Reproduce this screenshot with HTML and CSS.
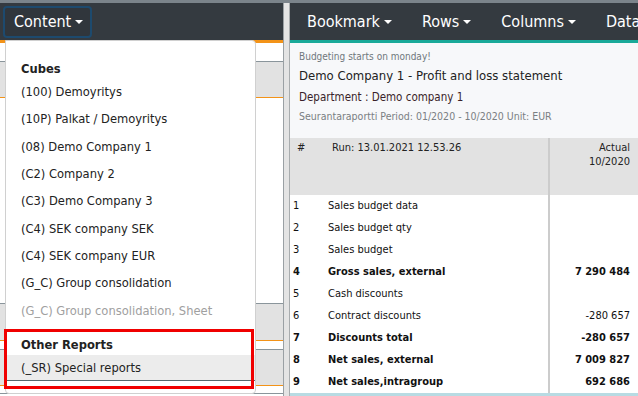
FILE: index.html
```html
<!DOCTYPE html>
<html>
<head>
<meta charset="utf-8">
<link rel="stylesheet" href="styles.css">
</head>
<body>
<div class="topstrip"></div>
<div class="main">
  <div class="leftpanel">
    <div class="navbar">
      <button class="navbtn focused">Content<span class="caret"></span></button>
    </div>
    <div class="orange-line"></div>
    <div class="lp-white h18"></div>
    <div class="lp-gray h36"></div>
    <div class="lp-white h205"></div>
    <div class="lp-gray h37"></div>
    <div class="lp-white h8"></div>
    <div class="lp-gray h36"></div>
    <div class="lp-white h7"></div>
    <div class="lp-line"></div>

    <div class="dropdown">
      <div class="dd-header">Cubes</div>
      <div class="dd-item">(100) Demoyritys</div>
      <div class="dd-item">(10P) Palkat / Demoyritys</div>
      <div class="dd-item">(08) Demo Company 1</div>
      <div class="dd-item">(C2) Company 2</div>
      <div class="dd-item">(C3) Demo Company 3</div>
      <div class="dd-item">(C4) SEK company SEK</div>
      <div class="dd-item">(C4) SEK company EUR</div>
      <div class="dd-item">(G_C) Group consolidation</div>
      <div class="dd-item disabled">(G_C) Group consolidation, Sheet</div>
      <div class="dd-header other">Other Reports</div>
      <div class="dd-item active">(_SR) Special reports</div>
    </div>
    <div class="redbox"></div>
  </div>
  <div class="divider"></div>
  <div class="rightpanel">
    <div class="navbar rnav">
      <span class="navlink">Bookmark<span class="caret"></span></span>
      <span class="navlink">Rows<span class="caret"></span></span>
      <span class="navlink">Columns<span class="caret"></span></span>
      <span class="navlink">Data</span>
    </div>
    <div class="teal-line"></div>
    <div class="info">
      <div class="notice">Budgeting starts on monday!</div>
      <div class="title">Demo Company 1 - Profit and loss statement</div>
      <div class="dept">Department : Demo company 1</div>
      <div class="period">Seurantaraportti Period: 01/2020 - 10/2020 Unit: EUR</div>
    </div>
    <div class="table">
      <div class="thead">
        <div class="c-num">#</div>
        <div class="c-label">Run: 13.01.2021 12.53.26</div>
        <div class="c-val">Actual<br>10/2020</div>
      </div>
      <div class="row"><div class="c-num">1</div><div class="c-label">Sales budget data</div><div class="c-val"></div></div>
      <div class="row"><div class="c-num">2</div><div class="c-label">Sales budget qty</div><div class="c-val"></div></div>
      <div class="row"><div class="c-num">3</div><div class="c-label">Sales budget</div><div class="c-val"></div></div>
      <div class="row bold"><div class="c-num">4</div><div class="c-label">Gross sales, external</div><div class="c-val">7 290 484</div></div>
      <div class="row"><div class="c-num">5</div><div class="c-label">Cash discounts</div><div class="c-val"></div></div>
      <div class="row"><div class="c-num">6</div><div class="c-label">Contract discounts</div><div class="c-val">-280 657</div></div>
      <div class="row bold"><div class="c-num">7</div><div class="c-label">Discounts total</div><div class="c-val">-280 657</div></div>
      <div class="row bold"><div class="c-num">8</div><div class="c-label">Net sales, external</div><div class="c-val">7 009 827</div></div>
      <div class="row bold"><div class="c-num">9</div><div class="c-label">Net sales,intragroup</div><div class="c-val">692 686</div></div>
      <div class="bluebar"></div>
    </div>
  </div>
</div>
</body>
</html>
```

FILE: styles.css
```css
* { box-sizing: border-box; }
html, body {
  margin: 0;
  padding: 0;
  width: 638px;
  height: 396px;
  overflow: hidden;
  background: #fff;
  font-family: "DejaVu Sans Condensed", "DejaVu Sans", sans-serif;
  font-stretch: condensed;
  color: #222;
}
.topstrip { height: 3px; background: #7b848b; }
.main { display: flex; height: 393px; }

.leftpanel { width: 283px; position: relative; flex: none; }
.navbar {
  height: 37px;
  background: #343a40;
  display: flex;
  align-items: center;
}
.navbtn {
  margin-left: 3px;
  height: 32px;
  width: 89px;
  background: #30363c;
  border: 2px solid #1d4a6e;
  border-radius: 4px;
  color: #fff;
  font-family: inherit;
  font-stretch: condensed;
  font-size: 16px;
  padding: 0 0 0 9px;
  text-align: left;
  display: flex;
  align-items: center;
}
.caret {
  display: inline-block;
  width: 0;
  height: 0;
  border-left: 4px solid transparent;
  border-right: 4px solid transparent;
  border-top: 4px solid #fff;
  margin-left: 4px;
  vertical-align: middle;
}
.orange-line { height: 3px; background: #f39318; }
.lp-white { background: #fff; }
.lp-gray { background: #e2e2e2; border-top: 1px solid #8a959b; border-bottom: 1px solid #f39318; }
.h18 { height: 18px; }
.h36 { height: 37px; }
.h37 { height: 38px; }
.h205 { height: 205px; }
.h8 { height: 8px; }
.h7 { height: 7px; }
.lp-line { height: 1px; background: #8a959b; }

.dropdown {
  position: absolute;
  left: 5px;
  top: 37px;
  width: 251px;
  height: 354px;
  background: #fff;
  border: 1px solid #d0d0d0;
  border-radius: 0 4px 4px 4px;
  padding-top: 18px;
  font-size: 12.8px;
}
.dd-header {
  height: 19px;
  padding-left: 15px;
  font-weight: bold;
  display: flex;
  align-items: center;
  color: #222;
}
.dd-header.other { margin-top: 11px; height: 20px; }
.dd-item {
  height: 27.3px;
  padding-left: 15px;
  display: flex;
  align-items: center;
  color: #222;
}
.dd-item.disabled { color: #a0a0a0; }
.dd-item.active {
  height: 26px;
  background: #ececec;
  border-bottom: 1px solid #55696e;
}
.redbox {
  position: absolute;
  left: 4px;
  top: 326px;
  width: 250px;
  height: 60px;
  border: 3px solid #f00000;
}

.divider {
  width: 7px;
  flex: none;
  background: #e4e4e4;
  border-left: 1px solid #9aa0a4;
  border-right: 1px solid #a8acae;
}

.rightpanel { flex: 1; min-width: 0; background: #fff; }
.rnav { padding-left: 17px; white-space: nowrap; overflow: hidden; }
.navlink {
  color: #fff;
  font-size: 16px;
  display: inline-flex;
  align-items: center;
  margin-right: 30px;
  flex: none;
}
.teal-line { height: 3px; background: #19a999; }
.info {
  height: 95px;
  background: #f7f8fa;
  padding: 5px 0 0 9px;
}
.notice { font-size: 10px; color: #6f777c; height: 17px; line-height: 17px; }
.title { font-size: 13px; color: #222; height: 22px; line-height: 22px; }
.dept { font-size: 11.5px; color: #3a1f2a; height: 20px; line-height: 20px; }
.period { font-size: 10.5px; color: #7a7f83; height: 19px; line-height: 19px; }

.table { font-size: 11px; }
.thead {
  display: flex;
  height: 57px;
  background: #e2e2e2;
}
.thead .c-num { padding: 3px 0 0 7px; }
.thead .c-label { padding: 3px 0 0 6px; }
.thead .c-val { padding-top: 3px; line-height: 14px; }
.c-num { width: 36px; flex: none; padding-left: 3px; }
.c-label { width: 224px; flex: none; border-right: 2px solid #cccccc; padding-left: 2px; }
.c-val { flex: 1; text-align: right; padding-right: 8px; }
.row { display: flex; height: 22px; line-height: 22px; color: #111; }
.row.bold { font-weight: bold; }
.bluebar { height: 5px; background: #b8dbe3; }
```
